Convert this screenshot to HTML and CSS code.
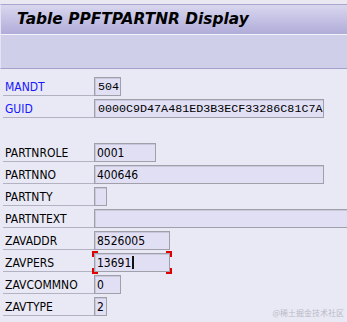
FILE: index.html
```html
<!DOCTYPE html>
<html lang="en">
<head>
  <meta charset="UTF-8">
  <title>Table PPFTPARTNR Display</title>
  <link rel="stylesheet" href="styles.css">
</head>
<body>
  <div class="screen">
    <div class="title-bar">
      <h1 class="title">Table PPFTPARTNR Display</h1>
    </div>
    <div class="toolbar"></div>

    <div class="fields">
      <div class="row">
        <label class="label key">MANDT</label>
        <div class="box mono w27">504</div>
      </div>
      <div class="row">
        <label class="label key">GUID</label>
        <div class="box mono w230">0000C9D47A481ED3B3ECF33286C81C7A</div>
      </div>
      <div class="row blank"></div>
      <div class="row">
        <label class="label">PARTNROLE</label>
        <div class="box w62">0001</div>
      </div>
      <div class="row">
        <label class="label">PARTNNO</label>
        <div class="box w230">400646</div>
      </div>
      <div class="row">
        <label class="label">PARTNTY</label>
        <div class="box w13"></div>
      </div>
      <div class="row">
        <label class="label">PARTNTEXT</label>
        <div class="box w300"></div>
      </div>
      <div class="row">
        <label class="label">ZAVADDR</label>
        <div class="box w76">8526005</div>
      </div>
      <div class="row">
        <label class="label">ZAVPERS</label>
        <div class="focus">
          <div class="box w76">13691<span class="caret"></span></div>
        </div>
      </div>
      <div class="row">
        <label class="label">ZAVCOMMNO</label>
        <div class="box w27">0</div>
      </div>
      <div class="row">
        <label class="label">ZAVTYPE</label>
        <div class="box w13">2</div>
      </div>
    </div>

    <div class="watermark">@稀土掘金技术社区</div>
  </div>
</body>
</html>
```

FILE: styles.css
```css
body {
  margin: 0;
  background: #e9e9f5;
  font-family: "DejaVu Sans Condensed", "DejaVu Sans", sans-serif;
}

.screen {
  position: relative;
  width: 347px;
  height: 322px;
  overflow: hidden;
  padding-top: 4px;
  box-sizing: border-box;
  background: #eae9f1;
}

.title-bar {
  height: 29px;
  border-top: 1px solid #a9a5cf;
  border-bottom: 1px solid #f4f3fb;
  border-left: 1px solid #e4e2f4;
  background: linear-gradient(to bottom, #d9d7ef, #b0acd9);
}

.title {
  margin: 0;
  padding: 6px 0 0 16px;
  font-family: "DejaVu Sans", sans-serif;
  font-size: 15.4px;
  font-weight: bold;
  font-style: italic;
  line-height: 17px;
  color: #000;
}

.toolbar {
  height: 33px;
  border-bottom: 1px solid #a5a1cc;
  border-left: 1px solid #e4e2f4;
  background: #cfcfea;
}

.fields {
  background: #e9e9f5;
  padding: 8px 0 0 3px;
  height: 260px;
}

.row {
  display: flex;
  align-items: flex-start;
  height: 22px;
}

.label {
  flex-shrink: 0;
  width: 91px;
  height: 19px;
  box-sizing: border-box;
  padding: 3px 0 0 2px;
  border-bottom: 1px solid #b2b2c2;
  font-size: 12px;
  line-height: 14px;
  color: #000;
}

.label.key {
  color: #1616ff;
}

.box {
  flex-shrink: 0;
  height: 19px;
  box-sizing: border-box;
  padding: 2px 0 0 2px;
  border: 1px solid #a0a0a8;
  box-shadow: inset 1px 1px 0 #c9c8dc;
  background: #e0dff4;
  font-size: 12px;
  line-height: 14px;
  color: #000;
  white-space: nowrap;
  overflow: hidden;
}

.box.mono {
  font-family: "Liberation Mono", monospace;
  font-size: 11.7px;
  padding-left: 3px;
}

.w13 { width: 13px; }
.w27 { width: 27px; }
.w62 { width: 62px; }
.w76 { width: 76px; }
.w230 { width: 230px; }
.w300 { width: 300px; }

.caret {
  display: inline-block;
  width: 2px;
  height: 13px;
  margin-left: 1px;
  vertical-align: -2px;
  background: #111;
}

.focus {
  position: relative;
  flex-shrink: 0;
}

/* red corner marks of the focused field */
.focus::before {
  content: "";
  position: absolute;
  top: -2px;
  left: -2px;
  right: -2px;
  bottom: -2px;
  background:
    linear-gradient(#e00000, #e00000) left top / 6px 2px no-repeat,
    linear-gradient(#e00000, #e00000) left top / 2px 6px no-repeat,
    linear-gradient(#e00000, #e00000) right top / 6px 2px no-repeat,
    linear-gradient(#e00000, #e00000) right top / 2px 6px no-repeat,
    linear-gradient(#e00000, #e00000) left bottom / 6px 2px no-repeat,
    linear-gradient(#e00000, #e00000) left bottom / 2px 6px no-repeat,
    linear-gradient(#e00000, #e00000) right bottom / 6px 2px no-repeat,
    linear-gradient(#e00000, #e00000) right bottom / 2px 6px no-repeat;
}

.watermark {
  position: absolute;
  right: 3px;
  bottom: 4px;
  font-family: "Noto Sans CJK SC", sans-serif;
  font-size: 8px;
  color: #b9b9c4;
}
```
